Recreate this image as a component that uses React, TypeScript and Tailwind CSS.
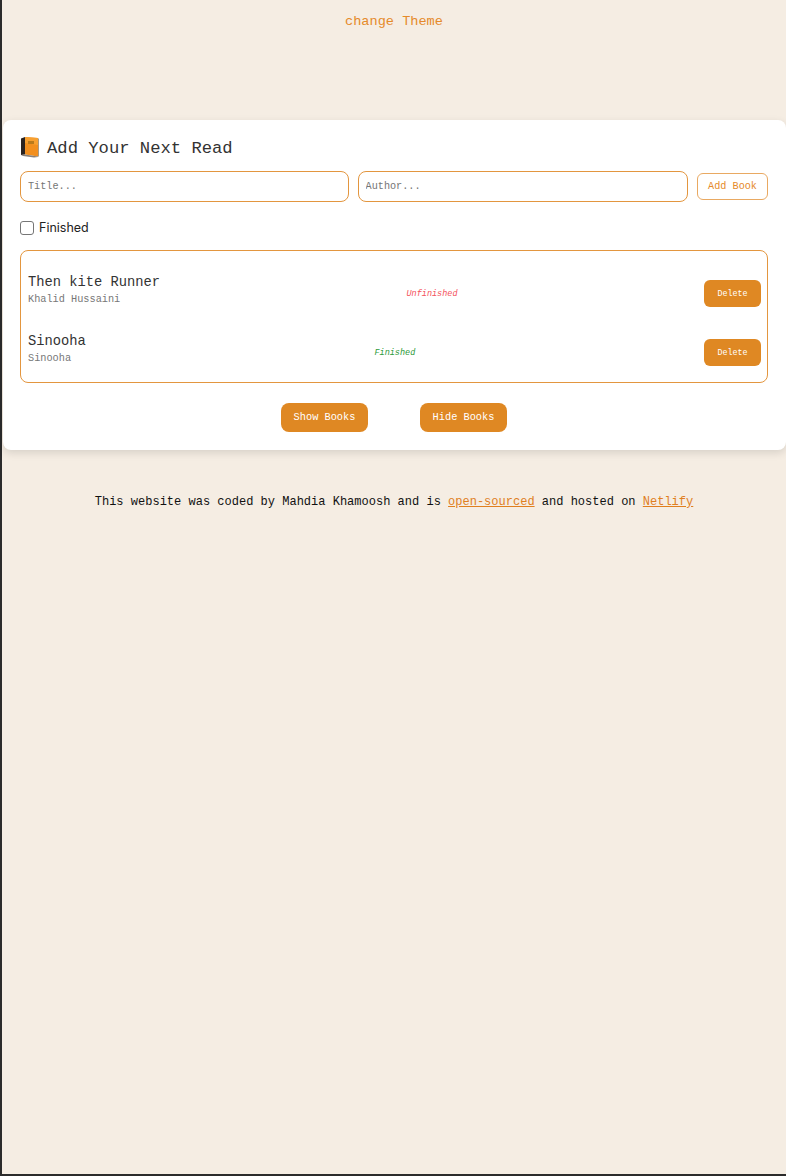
const BookIcon = () => (
  <svg width="20" height="22" viewBox="0 0 20 22" className="mb-1 shrink-0">
    <path d="M1 2.5 L5 1 L5 18.5 L1 19 Z" fill="#2a2320" />
    <path d="M5 1 L18 2 L18 20.5 L5 18.5 Z" fill="#f28f1e" />
    <path d="M5 1 L18 2 L18 9 L5 7 Z" fill="#f7a030" />
    <path d="M1 19 L5 18.5 L18 20.5 L18 21 L14 21.5 L3 20 Z" fill="#8a8078" />
    <path d="M18 2 L19 3 L19 20.5 L18 20.5 Z" fill="#a89a88" />
    <rect x="8" y="5" width="6" height="3" fill="#b97a1c" />
  </svg>
);

type Book = {
  title: string;
  author: string;
  finished: boolean;
};

const books: Book[] = [
  { title: "Then kite Runner", author: "Khalid Hussaini", finished: false },
  { title: "Sinooha", author: "Sinooha", finished: true },
];

const BookRow = ({ book }: { book: Book }) => (
  <div className="flex h-[59px] items-center justify-between">
    <div className="flex flex-col pb-[6px]">
      <span className="text-[13.75px] leading-[17px] text-[#333]">{book.title}</span>
      <span className="text-[10.25px] leading-[17px] text-[#777]">{book.author}</span>
    </div>
    {book.finished ? (
      <span className="pt-[2px] text-[8.5px] italic text-[#2e9a3a]">Finished</span>
    ) : (
      <span className="pt-[2px] text-[8.5px] italic text-[#f4525c]">Unfinished</span>
    )}
    <button className="h-[27px] w-[57px] rounded-md bg-[#df8823] pt-px text-[8.4px] text-white">
      Delete
    </button>
  </div>
);

export default function App() {
  return (
    <div className="h-[1176px] border-b-2 border-l-2 border-[#2b2b2b] bg-[#f5ede3] font-['Liberation_Mono',monospace]">
      <div className="flex h-[120px] justify-center pt-[14px]">
        <span className="text-[13.6px] leading-4 text-[#e58a2a]">change Theme</span>
      </div>

      <div className="ml-px h-[330px] rounded-lg bg-white pt-[17px] pr-[18px] pl-[17px] shadow-[0_3px_8px_rgba(0,0,0,0.12)]">
        <div className="flex h-6 items-center gap-[7px]">
          <BookIcon />
          <h1 className="text-[17.2px] font-normal text-[#333]">Add Your Next Read</h1>
        </div>

        <div className="mt-[10px] flex items-center gap-[9px]">
          <input
            placeholder="Title..."
            className="h-[31px] w-[329px] rounded-lg border border-[#e3963f] px-[7px] text-[10.2px] outline-none placeholder:text-[#757575]"
          />
          <input
            placeholder="Author..."
            className="h-[31px] w-[331px] rounded-lg border border-[#e3963f] px-[7px] text-[10.2px] outline-none placeholder:text-[#757575]"
          />
          <button className="h-[27px] w-[71px] rounded-md border border-[#e9a962] bg-white text-[10.2px] text-[#e58a2a]">
            Add Book
          </button>
        </div>

        <label className="mt-[18px] flex h-4 items-center gap-[5px] font-['Inter',sans-serif] text-[12.5px] text-[#222]">
          <span className="h-[14px] w-[14px] rounded-[3px] border border-[#767676] bg-white" />
          Finished
        </label>

        <div className="mt-[14px] h-[133px] rounded-lg border border-[#e3963f] pt-[13px] pr-[6px] pl-[7px]">
          {books.map((book) => (
            <BookRow key={book.title} book={book} />
          ))}
        </div>

        <div className="mt-[20px] flex justify-center gap-[52px]">
          <button className="h-[29px] w-[87px] rounded-lg bg-[#df8823] text-[10.3px] text-white">
            Show Books
          </button>
          <button className="h-[29px] w-[87px] rounded-lg bg-[#df8823] text-[10.3px] text-white">
            Hide Books
          </button>
        </div>
      </div>

      <p className="mt-[44px] text-center text-[12.03px] leading-4 text-[#111]">
        This website was coded by Mahdia Khamoosh and is{" "}
        <a href="#" className="text-[#e07f1f] underline">
          open-sourced
        </a>{" "}
        and hosted on{" "}
        <a href="#" className="text-[#e07f1f] underline">
          Netlify
        </a>
      </p>
    </div>
  );
}
